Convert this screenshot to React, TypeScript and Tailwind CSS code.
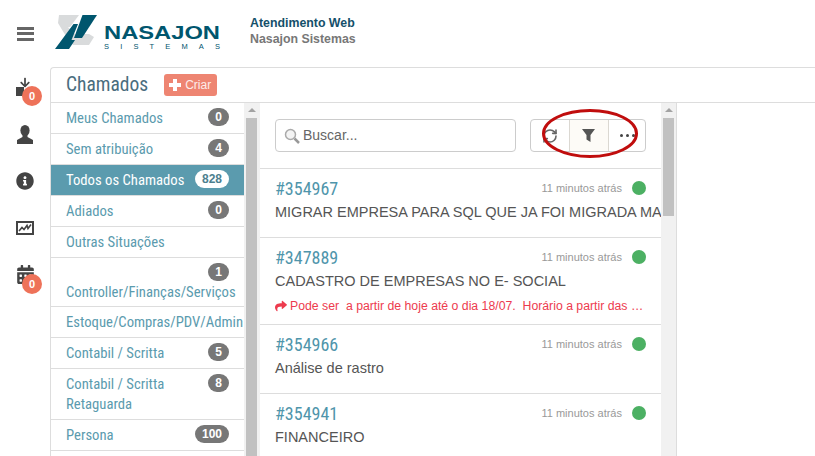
import React from "react";
import { FaInfoCircle, FaCalendarAlt, FaShare, FaArrowDown } from "react-icons/fa";
import { RefreshCw } from "lucide-react";

const NARROW = "font-['Liberation_Sans_Narrow','Roboto_Condensed',Roboto,sans-serif]";

function Badge({ children, active, className = "" }: { children: React.ReactNode; active?: boolean; className?: string }) {
  return (
    <span className={`inline-flex h-[18px] min-w-[21px] shrink-0 items-center justify-center rounded-full px-[7px] text-[12px] font-bold font-['Liberation_Sans',sans-serif] ${active ? "bg-white text-[#4d7f8f]" : "bg-[#777] text-white"} ${className}`}>
      {children}
    </span>
  );
}

function MenuRow({ label, badge, active, tall, stacked }: { label: React.ReactNode; badge?: string; active?: boolean; tall?: string; stacked?: boolean }) {
  return (
    <div className={`flex shrink-0 border-b border-[#ddd] px-[15px] ${stacked ? "flex-col justify-between" : "justify-between"} ${tall ?? "h-[31px]"} ${active ? "bg-[#5b9bae] text-white" : "text-[#5b9bae]"}`}>
      {stacked && badge && <Badge className="mt-[5px] self-end">{badge}</Badge>}
      <div className={`text-[14.7px] leading-[20px] whitespace-nowrap ${NARROW} ${stacked ? "pb-[4px]" : "pt-[5px]"}`}>{label}</div>
      {!stacked && badge && <Badge active={active} className="mt-[5px]">{badge}</Badge>}
    </div>
  );
}

function Ticket({ id, title, note, h }: { id: string; title: string; note?: string; h: string }) {
  return (
    <div className={`shrink-0 overflow-hidden border-b border-[#ddd] pl-[15px] ${h}`}>
      <div className="flex items-start justify-between pr-[15px] pt-[8px]">
        <span className={`text-[18px] leading-[24px] text-[#4f95ab] ${NARROW}`}>{id}</span>
        <div className="mt-[4px] flex items-center gap-[10px]">
          <span className="text-[11px] leading-[14px] text-[#999]">11 minutos atrás</span>
          <span className="h-[14px] w-[14px] rounded-full bg-[#4cb063]" />
        </div>
      </div>
      <div className="whitespace-nowrap text-[14.5px] leading-[22px] text-[#555]">{title}</div>
      {note && (
        <div className="mt-[5px] flex items-center gap-[3px] whitespace-nowrap text-[12.28px] leading-[18px] text-[#ed3b4e]">
          <FaShare className="h-[12px] w-[12px] shrink-0" />
          <span className="whitespace-pre">{note}</span>
        </div>
      )}
    </div>
  );
}

function Scrollbar({ thumb, width }: { thumb: string; width: string }) {
  return (
    <div className={`shrink-0 bg-[#f1f1f1] pl-[2px] ${width}`}>
      <div className="flex w-[11px] flex-col items-center">
        <div className="mt-[5px] h-0 w-0 border-x-[4px] border-b-[4px] border-x-transparent border-b-[#a3a3a3]" />
        <div className={`mt-[6px] w-[11px] bg-[#c1c1c1] ${thumb}`} />
      </div>
    </div>
  );
}

function RailItem({ children, badgeTop, h }: { children: React.ReactNode; badgeTop?: string; h: string }) {
  return (
    <div className={`relative flex items-center justify-center text-[#444] ${h}`}>
      {children}
      {badgeTop && (
        <span className={`absolute left-[22px] flex h-[20px] w-[20px] items-center justify-center rounded-full bg-[#ee7259] text-[11px] font-bold text-white ${badgeTop}`}>0</span>
      )}
    </div>
  );
}

export default function App() {
  return (
    <div className="flex h-[456px] w-[815px] flex-col overflow-hidden bg-white font-['Liberation_Sans',sans-serif]">
      <header className="flex h-[67px] shrink-0 items-center">
        <div className="flex w-[50px] flex-col items-start gap-[2.5px] pl-[17px]">
          <span className="h-[3px] w-[17px] bg-[#666]" />
          <span className="h-[3px] w-[17px] bg-[#666]" />
          <span className="h-[3px] w-[17px] bg-[#666]" />
        </div>
        <svg width="170" height="36" viewBox="0 0 170 36" className="ml-[5px] mt-[-1px]">
          <path d="M4 0H24L15 12H13L20 19H34L39 22L34 30H18L9 18L3 8Z" fill="#d9dbdc" />
          <path d="M27.5 0H42L27 23H19Z" fill="#00566e" />
          <path d="M0 34H14L20 25H16.5L23 9H18.5Z" fill="#00566e" />
          <text x="49" y="24" fontFamily="Liberation Sans" fontWeight="700" fontSize="19" textLength="116" lengthAdjust="spacingAndGlyphs" fill="#00566e">NASAJON</text>
          <text x="49" y="34" fontFamily="Liberation Sans" fontSize="7.5" textLength="116" fill="#00566e">SISTEMAS</text>
        </svg>
        <div className="ml-[25px] mt-[-5px] text-[12.35px] font-bold leading-[16px]">
          <div className="text-[#15506a]">Atendimento Web</div>
          <div className="text-[#777]">Nasajon Sistemas</div>
        </div>
      </header>
      <div className="flex min-h-0 flex-1">
        <nav className="flex w-[50px] shrink-0 flex-col">
          <RailItem h="h-[44px]" badgeTop="top-[19px]">
            <span className="relative mt-[-5px] block h-[19px] w-[18px]">
              <FaArrowDown className="absolute left-[4px] top-0 h-[11px] w-[10px]" />
              <span className="absolute bottom-0 left-0 h-[9px] w-[8px] bg-[#444]" />
            </span>
          </RailItem>
          <RailItem h="h-[46px]">
            <svg width="16" height="19" viewBox="0 0 16 19" fill="#444">
              <ellipse cx="8" cy="5.5" rx="4.6" ry="5.5" />
              <path d="M5.5 9H10.5V12L16 15V19H0V15L5.5 12Z" />
            </svg>
          </RailItem>
          <RailItem h="h-[47px]"><FaInfoCircle className="h-[18px] w-[18px]" /></RailItem>
          <RailItem h="h-[47px]">
            <svg width="18" height="14" viewBox="0 0 18 14">
              <path d="M0 0H18V14H0ZM2 2V12H16V2Z" fill="#444" fillRule="evenodd" />
              <path d="M3 10L6 6.5L8 8.5L11 4.5L12 7.5L15 3.5" fill="none" stroke="#444" strokeWidth="1.6" />
            </svg>
          </RailItem>
          <RailItem h="h-[47px]" badgeTop="top-[23px]">
            <FaCalendarAlt className="h-[19px] w-[17px]" />
          </RailItem>
        </nav>
        <main className="flex min-w-0 flex-1 flex-col rounded-tl-[4px] border-l border-t border-[#ddd]">
          <div className="flex h-[35px] shrink-0 items-center gap-[16px] border-b border-[#ddd] pl-[15px]">
            <span className={`text-[19.5px] leading-[26px] text-[#4a6d7e] ${NARROW}`}>Chamados</span>
            <span className="flex h-[22px] w-[53px] items-center gap-[4px] rounded-[3px] bg-[#ee8572] pl-[5px] text-[12px] text-[#fdecea]">
              <svg width="12" height="12" viewBox="0 0 12 12" fill="#fff">
                <path d="M4 0H8V4H12V8H8V12H4V8H0V4H4Z" />
              </svg>
              Criar
            </span>
          </div>
          <div className="flex min-h-0 flex-1">
            <aside className="flex w-[193px] shrink-0 flex-col overflow-hidden">
              <MenuRow label="Meus Chamados" badge="0" />
              <MenuRow label="Sem atribuição" badge="4" />
              <MenuRow label="Todos os Chamados" badge="828" active />
              <MenuRow label="Adiados" badge="0" />
              <MenuRow label="Outras Situações" />
              <MenuRow label="Controller/Finanças/Serviços" badge="1" tall="h-[49px]" stacked />
              <MenuRow label="Estoque/Compras/PDV/Admin" />
              <MenuRow label="Contabil / Scritta" badge="5" />
              <MenuRow label={<>Contabil / Scritta<br />Retaguarda</>} badge="8" tall="h-[51px]" />
              <MenuRow label="Persona" badge="100" />
            </aside>
            <Scrollbar thumb="h-[340px]" width="w-[16px]" />
            <section className="relative flex w-[401px] shrink-0 flex-col overflow-hidden">
              <div className="flex h-[66px] shrink-0 items-center justify-between border-b border-[#ddd] px-[15px]">
                <div className="flex h-[33px] w-[241px] items-center gap-[3px] rounded-[4px] border border-[#ccc] pl-[8px] text-[14px] text-[#666]">
                  <svg width="16" height="16" viewBox="0 0 16 16" fill="none" stroke="#aaa">
                    <circle cx="6.5" cy="6.5" r="5" strokeWidth="1.5" fill="#f4f4f4" />
                    <path d="M10.5 10.5L15 15" strokeWidth="2.5" stroke="#999" />
                  </svg>
                  Buscar...
                </div>
                <div className="flex h-[33px] w-[116px] rounded-[4px] border border-[#ccc] text-[#555]">
                  <div className="flex w-[38px] items-center justify-center">
                    <RefreshCw className="h-[16px] w-[16px] text-[#666]" strokeWidth={2.4} />
                  </div>
                  <div className="flex w-[40px] items-center justify-center border-x border-[#dbd8d2] bg-[#fdfbf7]">
                    <svg width="13" height="13" viewBox="0 0 13 13" fill="#555" className="ml-[-1px]">
                      <path d="M0 0H13L8.5 6V13L4.5 10.5V6Z" />
                    </svg>
                  </div>
                  <div className="flex flex-1 items-center justify-center">
                    <svg width="15" height="3" viewBox="0 0 15 3" fill="#444" className="ml-[1px]">
                      <circle cx="1.5" cy="1.5" r="1.5" />
                      <circle cx="7.5" cy="1.5" r="1.5" />
                      <circle cx="13.5" cy="1.5" r="1.5" />
                    </svg>
                  </div>
                </div>
              </div>
              <Ticket h="h-[69px]" id="#354967" title="MIGRAR EMPRESA PARA SQL QUE JA FOI MIGRADA MAS" />
              <Ticket h="h-[87px]" id="#347889" title="CADASTRO DE EMPRESAS NO E- SOCIAL" note="Pode ser  a partir de hoje até o dia 18/07.  Horário a partir das …" />
              <Ticket h="h-[69px]" id="#354966" title="Análise de rastro" />
              <Ticket h="h-[69px]" id="#354941" title="FINANCEIRO" />
              <svg width="96" height="49" viewBox="0 0 96 49" className="absolute left-[282px] top-[6px]">
                <ellipse cx="48" cy="24.5" rx="46.5" ry="23" fill="none" stroke="#c00d0d" strokeWidth="3" />
              </svg>
            </section>
            <div className="border-r border-[#ddd]">
              <Scrollbar thumb="h-[98px]" width="w-[15px] h-full" />
            </div>
            <div className="flex-1" />
          </div>
        </main>
      </div>
    </div>
  );
}
